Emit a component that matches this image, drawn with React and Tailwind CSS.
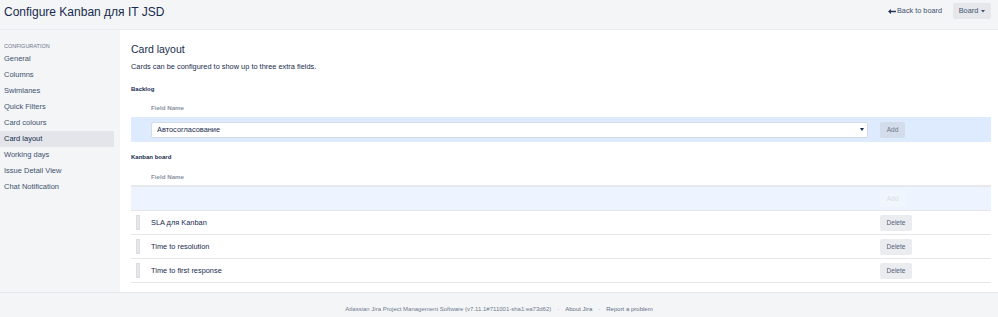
import React from 'react';

const NAV = [
  'General',
  'Columns',
  'Swimlanes',
  'Quick Filters',
  'Card colours',
  'Card layout',
  'Working days',
  'Issue Detail View',
  'Chat Notification',
];

const KANBAN_FIELDS = ['SLA для Kanban', 'Time to resolution', 'Time to first response'];

export default function App() {
  return (
    <div className="w-[998px] h-[317px] flex flex-col bg-[#f4f5f7] text-[#172b4d] font-['Liberation_Sans',Arial,sans-serif] overflow-hidden">
      {/* Header */}
      <header className="h-[30px] flex items-start justify-between pl-[4px] pr-[7px] pt-[4px] border-b border-[#ebecf0] shrink-0">
        <h1 className="text-[12px] leading-[16px] text-[#172b4d]">Configure Kanban для IT JSD</h1>
        <div className="flex items-start gap-[11px] -mt-[1px]">
          <a className="flex items-center h-[16px] text-[7.3px] text-[#42526e]">
            <svg width="8" height="5" viewBox="0 0 8 5" className="mr-[1px]">
              <path d="M0 2.5 L3 0 L3 1.7 L8 1.7 L8 3.3 L3 3.3 L3 5 Z" fill="#253858" />
            </svg>
            Back to board
          </a>
          <button className="h-[16px] w-[38px] rounded-[2px] bg-[#e6e7eb] text-[7.3px] text-[#42526e] flex items-center justify-center gap-[3px]">
            Board
            <svg width="4" height="3" viewBox="0 0 4 3">
              <path d="M0 0 L4 0 L2 2.5 Z" fill="#42526e" />
            </svg>
          </button>
        </div>
      </header>

      <div className="flex flex-1 min-h-0">
        {/* Sidebar */}
        <nav className="w-[120px] shrink-0 pt-[12px] pr-[6px]">
          <div className="pl-[4px] text-[5.5px] leading-[8px] text-[#6b778c] uppercase mb-[1px]">Configuration</div>
          {NAV.map((item) => (
            <div
              key={item}
              className={
                item === 'Card layout'
                  ? 'h-[16px] pl-[4px] flex items-center text-[7.5px] rounded-[1px] bg-[#e4e5ea] text-[#172b4d]'
                  : 'h-[16px] pl-[4px] flex items-center text-[7.5px] text-[#42526e]'
              }
            >
              {item}
            </div>
          ))}
        </nav>

        {/* Main */}
        <main className="flex-1 bg-white pl-[11px] pr-[7px] pt-[12px]">
          <h2 className="text-[10.5px] leading-[14px] text-[#172b4d]">Card layout</h2>
          <p className="mt-[7px] text-[7.4px] leading-[8px] text-[#172b4d]">
            Cards can be configured to show up to three extra fields.
          </p>

          {/* Backlog */}
          <h5 className="mt-[14px] text-[6px] leading-[8px] font-bold text-[#172b4d]">Backlog</h5>
          <div className="h-[24px] flex items-end pb-[5px] pl-[20px] text-[6.2px] leading-[8px] font-bold text-[#8993a4]">
            Field Name
          </div>
          <div className="h-[25px] flex items-center bg-[#deebff]">
            <div className="w-[20px]" />
            <div className="w-[717px] h-[16px] bg-white border border-[#d5dbe5] rounded-[2px] flex items-center justify-between pl-[5px] pr-[3px]">
              <span className="text-[7.4px] text-[#172b4d]">Автосогласование</span>
              <svg width="4" height="3" viewBox="0 0 4 3">
                <path d="M0 0 L4 0 L2 3 Z" fill="#172b4d" />
              </svg>
            </div>
            <div className="w-[12px]" />
            <button className="w-[25px] h-[16px] rounded-[2px] bg-[#d3dcea] text-[6.5px] text-[#6b778c] flex items-center justify-center">
              Add
            </button>
          </div>

          {/* Kanban board */}
          <h5 className="mt-[11px] text-[6px] leading-[8px] font-bold text-[#172b4d]">Kanban board</h5>
          <div className="h-[26px] flex items-end pb-[4px] pl-[20px] text-[6.2px] leading-[8px] font-bold text-[#8993a4] border-b-2 border-[#e6e8ec]">
            Field Name
          </div>
          <div className="h-[24px] flex items-center justify-end bg-[#edf4ff] border-b border-[#e4e6ea] pr-[86px]">
            <button className="w-[25px] h-[16px] rounded-[2px] bg-[#f1f5fc] text-[6.5px] text-[#d8dee8] flex items-center justify-center">
              Add
            </button>
          </div>
          {KANBAN_FIELDS.map((f) => (
            <div key={f} className="h-[24px] flex items-center border-b border-[#e4e6ea]">
              <div className="w-[20px] h-full flex items-center pl-[5px]">
                <div className="w-[4px] h-[15px] bg-[#e6e7eb] border border-[#dcdde2]" />
              </div>
              <span className="flex-1 text-[7.4px] text-[#172b4d]">{f}</span>
              <button className="w-[32px] h-[16px] rounded-[2px] bg-[#ebecf0] text-[6.5px] text-[#505f79] flex items-center justify-center mr-[79px]">
                Delete
              </button>
            </div>
          ))}
        </main>
      </div>

      {/* Footer */}
      <footer className="h-[25px] shrink-0 border-t border-[#e4e6ea] pt-[12px] flex justify-center text-[6px] leading-[8px] text-[#707b8f]">
        <span>Atlassian Jira Project Management Software (v7.11.1#711001-sha1:ea73d62)</span>
        <span className="mx-[6px]">·</span>
        <span className="text-[#5e6c84]">About Jira</span>
        <span className="mx-[6px]">·</span>
        <span className="text-[#5e6c84]">Report a problem</span>
      </footer>
    </div>
  );
}
